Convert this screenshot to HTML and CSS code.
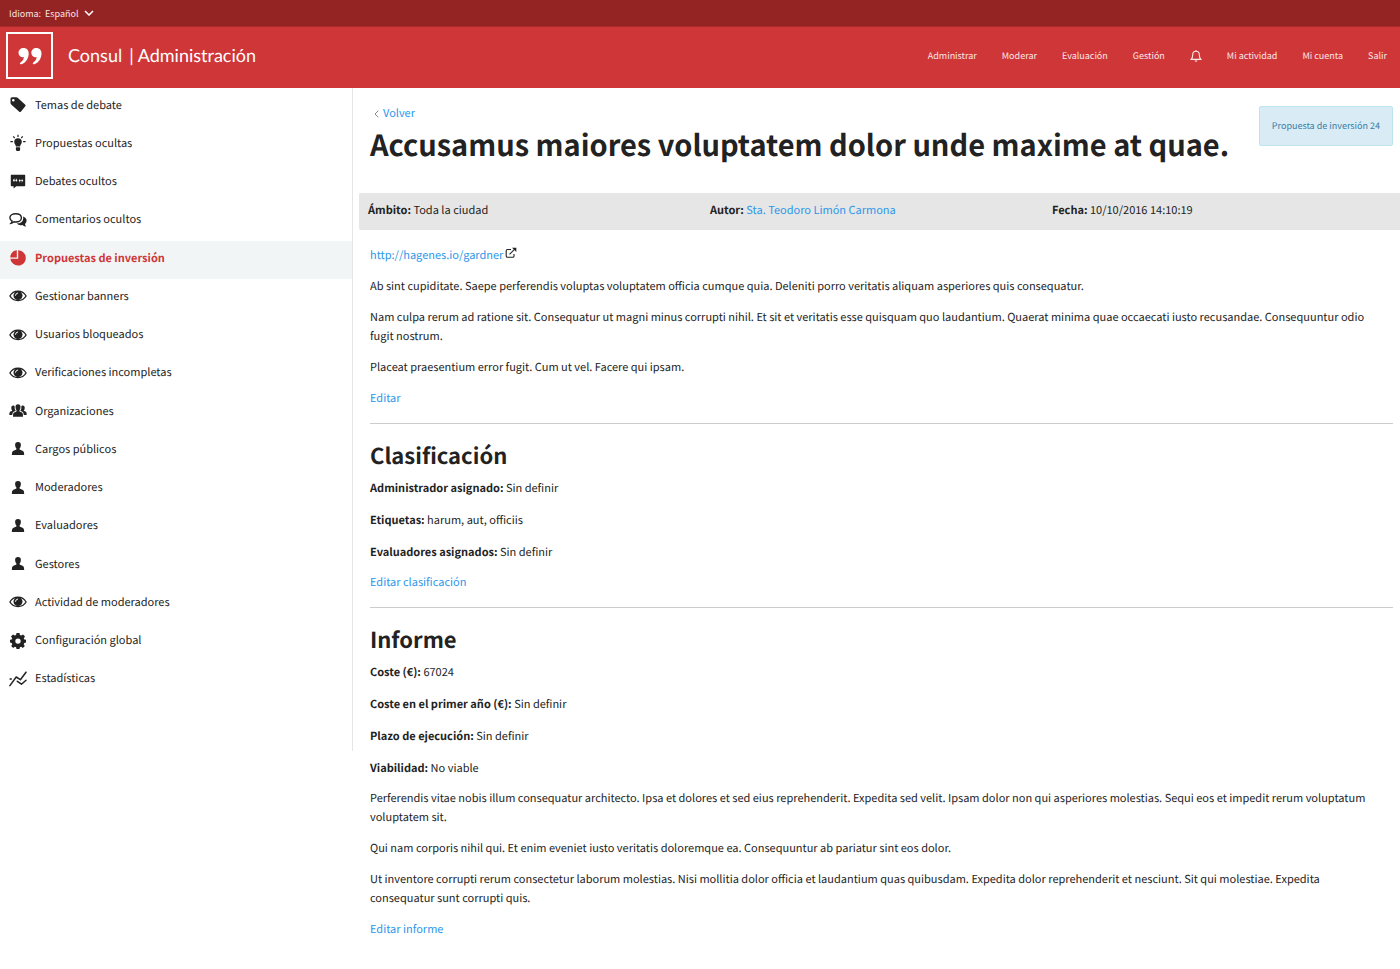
FILE: index.html
```html
<!DOCTYPE html>
<html lang="es">
<head>
<meta charset="utf-8">
<meta name="viewport" content="width=device-width, initial-scale=1">
<title>Consul | Administración</title>
<link rel="stylesheet" href="styles.css">
</head>
<body>
<svg class="sprite" aria-hidden="true">
  <symbol id="i-tag" viewBox="0 0 18 18"><path fill-rule="evenodd" d="M1.500 2.800Q1.500 1.300 3 1.300H7.200Q8.200 1.300 8.900 2L16.300 8.700Q17 9.500 16.300 10.300L11.800 15.700Q11.100 16.400 10.300 15.800L2.200 8.600Q1.500 7.900 1.500 7ZM4.300 2.900A1.300 1.300 0 1 0 4.300 5.500A1.300 1.300 0 1 0 4.300 2.900Z"/></symbol>
  <symbol id="i-bulb" viewBox="0 0 18 18"><path d="M9 4.300A3.800 3.800 0 0 1 12.800 8.100C12.800 10 11.200 10.800 11.100 12.600H6.900C6.800 10.800 5.200 10 5.200 8.100A3.800 3.800 0 0 1 9 4.300ZM6.900 13.300H11.100V16L10.300 17H7.700L6.900 16Z"/><path fill="none" stroke="currentColor" stroke-width="1.200" d="M9 .8V2.900M4.300 2.300L5.700 4.100M13.700 2.300L12.300 4.100M1.400 7.600H3.900M14.100 7.600H16.600"/></symbol>
  <symbol id="i-debate" viewBox="0 0 18 18"><path d="M2.400 1.700H15.600Q16.200 1.700 16.200 2.300V12.600Q16.200 13.200 15.600 13.200H7.300L4.600 15.400V13.200H2.400Q1.800 13.200 1.800 12.600V2.300Q1.800 1.700 2.400 1.700Z"/><g fill="#fff"><circle cx="5" cy="7.500" r=".9"/><circle cx="7.400" cy="7.500" r=".9"/><circle cx="10.700" cy="7.300" r=".9"/><circle cx="13.100" cy="7.300" r=".9"/></g><path fill="none" stroke="#fff" stroke-width=".7" d="M4.400 7.500Q4.400 6.300 5.500 5.900M6.800 7.500Q6.800 6.300 7.900 5.900M11.300 7.300Q11.300 8.500 10.200 9M13.700 7.300Q13.700 8.500 12.600 9"/></symbol>
  <symbol id="i-comments" viewBox="0 0 18 18"><path fill="none" stroke="currentColor" stroke-width="1.400" d="M6.700 2.700C9.900 2.700 12.400 4.300 12.400 6.800S9.900 11 6.700 11Q5.800 11 5 10.800Q3.700 12 2.100 12.300Q3.100 11.200 3 9.900Q.9 8.800.9 6.800C.9 4.300 3.500 2.700 6.700 2.700Z"/><path d="M14 5.600Q17.600 6.900 17.600 9.800Q17.600 11.600 16 12.900Q16.100 14.400 17.400 15.600Q15 15.500 13.500 14Q9.900 14.700 7.600 12.500Q13.900 12.200 14.200 7.700Q14.300 6.600 14 5.600Z"/></symbol>
  <symbol id="i-pie" viewBox="0 0 18 18"><path d="M7.800 1.200V8.400H1.300C1.300 4.500 4.200 1.500 7.800 1.200ZM9.200 1.200C13.400 1.300 16.800 4.600 16.800 8.900C16.800 13.200 13.400 16.500 9.200 16.500C5.300 16.500 1.900 13.700 1.400 9.800H9.200Z"/></symbol>
  <symbol id="i-eye" viewBox="0 0 18 18"><path fill="none" stroke="currentColor" stroke-width="1.300" d="M.9 9C4.500 2.500 13.500 2.500 17.100 9C13.500 15.100 4.500 15.100.9 9Z"/><circle cx="9" cy="8.600" r="4.500"/><path fill="none" stroke="#fff" stroke-width="1" stroke-linecap="round" d="M6.500 8.300Q6.600 6.300 8.700 6"/></symbol>
  <symbol id="i-group" viewBox="0 0 18 18"><path d="M9 2.200Q11.700 2.200 11.500 5.300Q11.400 7.300 10.500 8.300V9.400L13.400 10.700Q14 11.100 14 14.700H4Q4 11.100 4.600 10.700L7.500 9.400V8.300Q6.600 7.300 6.500 5.300Q6.300 2.200 9 2.200ZM4.200 3.500Q5.200 3.300 5.600 3.900Q5.300 7.100 6.700 8.700L4.200 9.900Q3.400 10.400 3.200 12.900H.3Q.3 10.300 1 9.800L3.300 8.700Q2 7.400 2.300 5.200Q2.500 3.700 4.200 3.500ZM13.800 3.500Q12.800 3.300 12.400 3.900Q12.700 7.100 11.300 8.700L13.800 9.900Q14.600 10.400 14.800 12.900H17.700Q17.700 10.300 17 9.800L14.700 8.700Q16 7.400 15.700 5.200Q15.500 3.700 13.800 3.500Z"/></symbol>
  <symbol id="i-user" viewBox="0 0 18 18"><path d="M9 2Q12 2 11.900 5.300Q11.700 7.500 10.600 8.600V9.500L14 10.900Q15.200 11.400 15.200 15H2.800Q2.800 11.400 4 10.900L7.400 9.500V8.600Q6.300 7.500 6.100 5.300Q6 2 9 2Z"/></symbol>
  <symbol id="i-gear" viewBox="0 0 18 18"><path fill-rule="evenodd" d="M7.500 1H10.500L10.900 3.100L12.200 3.600L14 2.400L16 4.500L14.800 6.200L15.300 7.500L17 7.800V10.600L15.300 11L14.700 12.200L15.800 13.900L13.800 15.900L12.200 14.700L10.900 15.200L10.500 17H7.500L7.100 15.200L5.800 14.700L4.200 15.900L2.200 13.900L3.300 12.200L2.700 11L1 10.600V7.800L2.700 7.500L3.200 6.200L2 4.500L4 2.400L5.800 3.600L7.100 3.100ZM9 6.400A2.700 2.700 0 1 0 9 11.800A2.700 2.700 0 1 0 9 6.400Z"/></symbol>
  <symbol id="i-stats" viewBox="0 0 18 18"><path fill="none" stroke="currentColor" stroke-width="1.500" stroke-linecap="round" stroke-linejoin="round" d="M.9 15.600L7.200 7L11.400 9.700L17 2.200M1.100 9L2.300 8.900M8.300 11.300L12.500 14.200L17 10.300"/></symbol>
  <symbol id="i-quote" viewBox="0 0 24 18"><path d="M5.500 1C8.700 1 10.700 3.100 10.700 6.500C10.700 11.500 7.600 15.800 3.700 17.200Q2.100 17.600 1.900 16.500Q1.900 15.800 2.900 15.200Q5.500 13.600 6 10.200C3 10.800.5 8.700.5 5.800C.5 3.100 2.700 1 5.500 1Z"/><path d="M18.300 1C21.500 1 23.500 3.100 23.500 6.500C23.500 11.500 20.400 15.800 16.500 17.200Q14.900 17.600 14.700 16.500Q14.700 15.800 15.700 15.200Q18.300 13.600 18.800 10.200C15.800 10.800 13.300 8.700 13.300 5.800C13.300 3.100 15.500 1 18.300 1Z"/></symbol>
  <symbol id="i-bell" viewBox="0 0 12 14"><path fill="none" stroke="currentColor" stroke-width="1.100" d="M1.200 10.400Q2.700 8.900 2.700 5.700C2.700 3.600 4 2.200 6 2.200S9.300 3.600 9.300 5.700Q9.300 8.900 10.800 10.400ZM6 .9V2.200M4.800 11.700Q6 12.700 7.200 11.700"/></symbol>
  <symbol id="i-down" viewBox="0 0 10 6"><path fill="none" stroke="currentColor" stroke-width="1.500" d="M1 1L5 5L9 1"/></symbol>
  <symbol id="i-left" viewBox="0 0 5 8"><path fill="none" stroke="currentColor" stroke-width="1" d="M4.300.7L1 4L4.300 7.300"/></symbol>
  <symbol id="i-external" viewBox="0 0 12 12"><path fill="none" stroke="currentColor" stroke-width="1.100" d="M6 2.500H2.500Q1.200 2.500 1.200 3.800V9Q1.200 10.300 2.500 10.300H7.700Q9 10.300 9 9V7M4.500 7.300L9.500 2.300"/><path d="M7 .7H11.300V5L9.900 3.600L8.400 2.100Z"/></symbol>
</svg>

<header>
  <div class="topbar">
    <label for="locale">Idioma:</label>
    <span class="locale">
      <select id="locale"><option>Español</option></select>
      <svg class="caret" aria-hidden="true"><use href="#i-down"/></svg>
    </span>
  </div>
  <div class="masthead">
    <a class="brand" href="#">
      <span class="logo"><svg aria-hidden="true"><use href="#i-quote"/></svg></span>
      <span class="brand-name">Consul</span>
      <span class="brand-area">| Administración</span>
    </a>
    <nav class="account" aria-label="Cuenta">
      <a href="#">Administrar</a>
      <a href="#">Moderar</a>
      <a href="#">Evaluación</a>
      <a href="#">Gestión</a>
      <a class="bell" href="#" aria-label="Notificaciones"><svg aria-hidden="true"><use href="#i-bell"/></svg></a>
      <a href="#">Mi actividad</a>
      <a href="#">Mi cuenta</a>
      <a href="#">Salir</a>
    </nav>
  </div>
</header>

<div class="layout">
  <nav class="sidebar" aria-label="Administración">
    <ul class="menu">
      <li><a href="#"><svg aria-hidden="true"><use href="#i-tag"/></svg>Temas de debate</a></li>
      <li><a href="#"><svg aria-hidden="true"><use href="#i-bulb"/></svg>Propuestas ocultas</a></li>
      <li><a href="#"><svg aria-hidden="true"><use href="#i-debate"/></svg>Debates ocultos</a></li>
      <li><a href="#"><svg aria-hidden="true"><use href="#i-comments"/></svg>Comentarios ocultos</a></li>
      <li><a class="active" href="#" aria-current="page"><svg aria-hidden="true"><use href="#i-pie"/></svg>Propuestas de inversión</a></li>
      <li><a href="#"><svg aria-hidden="true"><use href="#i-eye"/></svg>Gestionar banners</a></li>
      <li><a href="#"><svg aria-hidden="true"><use href="#i-eye"/></svg>Usuarios bloqueados</a></li>
      <li><a href="#"><svg aria-hidden="true"><use href="#i-eye"/></svg>Verificaciones incompletas</a></li>
      <li><a href="#"><svg aria-hidden="true"><use href="#i-group"/></svg>Organizaciones</a></li>
      <li><a href="#"><svg aria-hidden="true"><use href="#i-user"/></svg>Cargos públicos</a></li>
      <li><a href="#"><svg aria-hidden="true"><use href="#i-user"/></svg>Moderadores</a></li>
      <li><a href="#"><svg aria-hidden="true"><use href="#i-user"/></svg>Evaluadores</a></li>
      <li><a href="#"><svg aria-hidden="true"><use href="#i-user"/></svg>Gestores</a></li>
      <li><a href="#"><svg aria-hidden="true"><use href="#i-eye"/></svg>Actividad de moderadores</a></li>
      <li><a href="#"><svg aria-hidden="true"><use href="#i-gear"/></svg>Configuración global</a></li>
      <li><a href="#"><svg aria-hidden="true"><use href="#i-stats"/></svg>Estadísticas</a></li>
    </ul>
  </nav>

  <main class="content">
    <div class="heading">
      <div>
        <a class="back" href="#"><svg aria-hidden="true"><use href="#i-left"/></svg>Volver</a>
        <h1>Accusamus maiores voluptatem dolor unde maxime at quae.</h1>
      </div>
      <div class="callout">Propuesta de inversión 24</div>
    </div>

    <div class="facts">
      <div><strong>Ámbito:</strong> Toda la ciudad</div>
      <div><strong>Autor:</strong> <a href="#">Sta. Teodoro Limón Carmona</a></div>
      <div><strong>Fecha:</strong> 10/10/2016 14:10:19</div>
    </div>

    <section class="block">
      <p><a href="#">http://hagenes.io/gardner</a><svg class="external" aria-hidden="true"><use href="#i-external"/></svg></p>
      <p>Ab sint cupiditate. Saepe perferendis voluptas voluptatem officia cumque quia. Deleniti porro veritatis aliquam asperiores quis consequatur.</p>
      <p>Nam culpa rerum ad ratione sit. Consequatur ut magni minus corrupti nihil. Et sit et veritatis esse quisquam quo laudantium. Quaerat minima quae occaecati iusto recusandae. Consequuntur odio fugit nostrum.</p>
      <p>Placeat praesentium error fugit. Cum ut vel. Facere qui ipsam.</p>
      <p><a href="#">Editar</a></p>
    </section>

    <section class="block ruled">
      <h2>Clasificación</h2>
      <div class="fields">
        <div><strong>Administrador asignado:</strong> Sin definir</div>
        <div><strong>Etiquetas:</strong> harum, aut, officiis</div>
        <div><strong>Evaluadores asignados:</strong> Sin definir</div>
      </div>
      <p><a href="#">Editar clasificación</a></p>
    </section>

    <section class="block ruled">
      <h2>Informe</h2>
      <div class="fields">
        <div><strong>Coste (€):</strong> 67024</div>
        <div><strong>Coste en el primer año (€):</strong> Sin definir</div>
        <div><strong>Plazo de ejecución:</strong> Sin definir</div>
        <div><strong>Viabilidad:</strong> No viable</div>
      </div>
      <p>Perferendis vitae nobis illum consequatur architecto. Ipsa et dolores et sed eius reprehenderit. Expedita sed velit. Ipsam dolor non qui asperiores molestias. Sequi eos et impedit rerum voluptatum voluptatem sit.</p>
      <p>Qui nam corporis nihil qui. Et enim eveniet iusto veritatis doloremque ea. Consequuntur ab pariatur sint eos dolor.</p>
      <p>Ut inventore corrupti rerum consectetur laborum molestias. Nisi mollitia dolor officia et laudantium quas quibusdam. Expedita dolor reprehenderit et nesciunt. Sit qui molestiae. Expedita consequatur sunt corrupti quis.</p>
      <p><a href="#">Editar informe</a></p>
    </section>
  </main>
</div>
</body>
</html>
```
FILE: styles.css
```css
* { box-sizing: border-box; }

body {
  margin: 0;
  background: #fff;
  color: #222;
  font-family: "Noto Sans CJK SC", "Open Sans", sans-serif;
  font-size: 11px;
  line-height: 19px;
  text-rendering: geometricPrecision;
}

a { color: #2c96ea; text-decoration: none; }
svg { fill: currentColor; }
h1, h2, p, ul { margin: 0; }
.sprite { display: none; }

.topbar {
  display: flex;
  align-items: center;
  gap: 4px;
  height: 27px;
  padding-left: 9px;
  background: #942323;
  border-bottom: 1px solid #a82a2a;
  color: #f6e3e3;
  font-size: 9px;
}
.locale { display: flex; align-items: center; }
.locale select {
  appearance: none;
  margin: 0 -10px 0 0;
  padding: 0 15px 0 0;
  border: 0;
  background: transparent;
  color: inherit;
  font: inherit;
}
.caret { width: 10px; height: 6px; color: #fff; pointer-events: none; }

.masthead {
  display: flex;
  align-items: center;
  justify-content: space-between;
  min-height: 61px;
  padding: 0 13px 4px 6px;
  background: #cf3638;
}
.brand {
  display: flex;
  align-items: center;
  color: #fff;
  font-family: Lato, sans-serif;
  font-size: 18px;
}
.logo {
  display: grid;
  place-items: center;
  width: 47px;
  height: 47px;
  margin-right: 15px;
  border: 2px solid #fff;
}
.logo svg { width: 24px; height: 18px; }
.brand-name { margin-right: 7px; }
.account { display: flex; align-items: center; gap: 25px; font-size: 9px; }
.account a { color: #fbe6e6; }
.account .bell { display: flex; }
.bell svg { width: 12px; height: 14px; }

.layout {
  display: grid;
  grid-template-columns: minmax(0, 353fr) minmax(0, 1047fr);
  align-items: start;
}
.sidebar { padding-bottom: 51px; border-right: 1px solid #e3e6e6; }
.menu {
  display: grid;
  grid-auto-rows: 1fr;
  min-height: 612px;
  padding: 0;
  list-style: none;
}
.menu a {
  display: flex;
  align-items: center;
  gap: 8px;
  height: 100%;
  padding: 0 9px 4px;
  color: #222;
}
.menu svg { width: 18px; height: 18px; }
.menu .active { background: #f1f5f6; color: #cf3638; font-weight: 700; }

.content { padding: 16px 0 24px 6px; }
.heading {
  display: flex;
  align-items: flex-start;
  justify-content: space-between;
  padding: 0 7px 29px 11px;
}
.back { display: inline-flex; align-items: center; gap: 4px; padding-left: 4px; }
.back svg { width: 5px; height: 8px; color: #888; }
h1 { font-size: 29px; line-height: 40px; }
.callout {
  flex: none;
  margin-top: 2px;
  padding: 9px 12px 10px;
  border: 1px solid #bce4ee;
  border-radius: 2px;
  background: #d9ecf5;
  color: #3a7ca5;
  font-size: 9px;
}

.facts {
  display: grid;
  grid-template-columns: repeat(3, 1fr);
  padding: 8px 6px 10px 9px;
  border-radius: 2px 0 0 2px;
  background: #e6e6e6;
}
.block { margin: 16px 7px 0 11px; }
.block p { margin-bottom: 12px; padding-right: 18px; }
.external { width: 12px; height: 12px; margin-left: 2px; }
.ruled { margin-top: 15px; border-top: 1px solid #ccc; padding-top: 12px; }
h2 { margin-bottom: 5px; font-size: 22px; line-height: 38px; }
.fields { display: grid; gap: 13px; margin-bottom: 11px; }
```
